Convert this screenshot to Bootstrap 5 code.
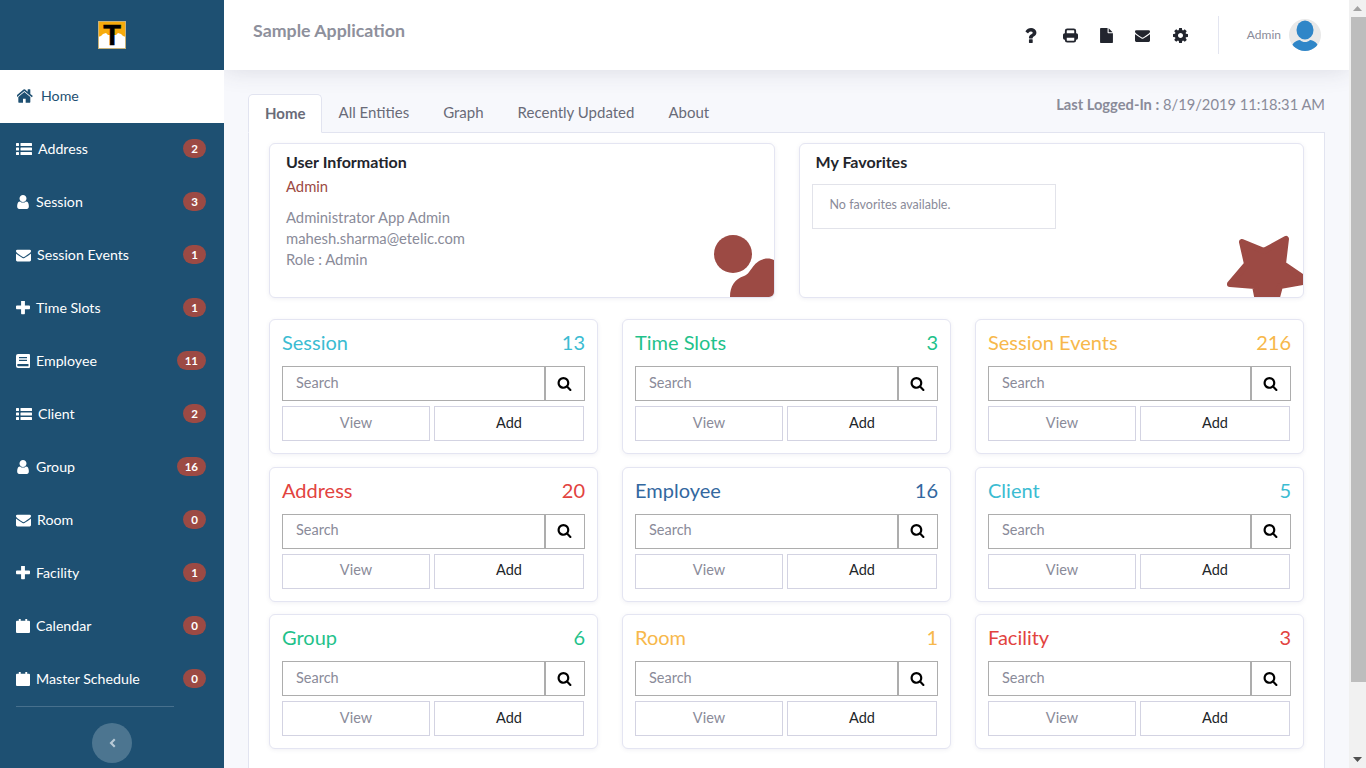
<!DOCTYPE html>
<html lang="en">
<head>
  <meta charset="UTF-8" />
  <title>Sample Application</title>
  <meta name="viewport" content="width=device-width, initial-scale=1" />
  <link href="https://cdn.jsdelivr.net/npm/bootstrap@5.3.0/dist/css/bootstrap.min.css" rel="stylesheet" />
  <style>
    html, body { height: 768px; overflow: hidden; }
    body { font-family: "Lato", "Open Sans", sans-serif; font-size: 14px; background: #f7f8fc; color: #8a8b99; }
    .app-shell { height: 768px; }

    /* sidebar */
    .side-bar { width: 224px; background: #1e5072; flex-shrink: 0; }
    .side-logo { height: 70px; }
    .logo-mark { width: 28px; height: 28px; position: relative; font: 700 29px/28px "Liberation Sans", sans-serif; color: #000; -webkit-text-stroke: .5px #000; }
    .logo-mark svg { position: absolute; left: 0; top: 0; }
    .logo-mark span { position: relative; }
    .side-link { height: 53px; padding: 0 18px 2px 16px; color: #fff; font-size: 14.2px; text-decoration: none; }
    .side-link.active { background: #fff; color: #1e5072; padding-left: 17px; }
    .side-ico { width: 14px; height: 14px; fill: currentColor; margin-right: 6px; flex-shrink: 0; }
    .side-ico.list-ico { width: 16px; margin-right: 6px; }
    .side-ico.mail-ico { width: 15px; margin-right: 6px; }
    .side-ico.home-ico { width: 16px; margin-right: 8px; }
    .side-count { background: #9c4a44; color: #fff; font-size: 11.5px; font-weight: 700; min-width: 21px; height: 19px; border-radius: 10px; padding: 0 8px; }
    .side-rule { height: 1px; background: #47708d; margin: 0 50px 0 16px; }
    .side-toggle { width: 40px; height: 40px; background: #4c7590; border: 0; color: #b9cad6; margin: 16px auto 0; padding: 0; }
    .side-toggle svg { width: 10px; height: 10px; fill: currentColor; }

    /* header */
    .top-bar { height: 70px; background: #fff; box-shadow: 0 0 24px rgba(60, 64, 90, .16); padding-left: 29px; padding-right: 28px; position: relative; z-index: 2; flex-shrink: 0; }
    .top-title { font-size: 17.8px; font-weight: 700; color: #8e909c; margin-top: -10px; }
    .top-ico { width: 15px; height: 15px; fill: #22252e; }
    .top-tools { gap: 21px; }
    .top-tools .help-ico { margin-right: 4px; }
    .top-tools .gear-ico { margin-left: 2px; }
    .top-divider { width: 1px; height: 38px; background: #e3e5f0; margin: 0 28px 0 30px; }
    .top-user { font-size: 12px; color: #8a8b99; }
    .top-avatar { width: 32px; height: 32px; margin-left: 8px; }

    /* tabs */
    .main-area { padding: 24px 24px 0; position: relative; }
    .last-login { position: absolute; right: 24px; top: 23px; font-size: 14.7px; }
    .last-login b { font-weight: 700; }
    .page-tabs { border-bottom-color: #e2e4f0; }
    .page-tabs .nav-link { color: #696b78; font-size: 15px; padding: 7px 17px; height: 39px; border-radius: 5px 5px 0 0; }
    .page-tabs .nav-link.active { background: #fff; border-color: #e2e4f0 #e2e4f0 #fff; color: #696b78; font-weight: 700; padding: 7px 15px 7px 16px; }
    .tab-body { background: #fff; border: 1px solid #e2e4f0; border-top: 0; padding: 10px 20px 40px; min-height: 660px; }

    /* info cards */
    .plain-card { border-color: #e4e5f2; border-radius: 6px; box-shadow: 0 1px 4px rgba(70, 70, 120, .08); }
    .info-card { height: 155px; overflow: hidden; padding: 8px 16px; }
    .info-title { font-size: 16px; font-weight: 700; color: #23252c; line-height: 20px; margin: 0 0 4px; }
    .info-role { color: #9c4a44; font-size: 14.8px; line-height: 21px; margin-bottom: 10px; }
    .info-line { font-size: 14.8px; line-height: 21px; }
    .info-art { position: absolute; right: 0; bottom: 0; fill: #9c4a44; }
    .fav-box { border: 1px solid #e2e3ea; width: 244px; height: 45px; margin: 8px 0 0 -4px; padding: 11px 17px; font-size: 12.5px; }
    .info-row { margin-bottom: 21px; }

    /* entity cards */
    .entity-row { --bs-gutter-y: 12.5px; }
    .entity-card { height: 135px; padding: 9px 12px; }
    .entity-head { font-size: 20px; line-height: 26px; margin-bottom: 11px; }
    .entity-search { height: 35px; }
    .entity-search .form-control { border: 1px solid #adadad; border-radius: 0; font-size: 14.5px; padding: 0 13px 2px; color: #8a8b99; box-shadow: none; }
    .entity-search .form-control::placeholder { color: #8a8b99; }
    .entity-search .btn { width: 40px; padding: 0 1px 1px 0; margin-left: 0 !important; border: 1px solid #adadad; border-radius: 0; background: #fff; }
    .entity-search .btn svg { width: 15px; height: 15px; fill: #000; }
    .entity-btns { gap: 4px; margin-top: 5px; padding-right: 1px; }
    .entity-btns .btn { height: 35px; padding: 0 0 2px; border: 1px solid #d3d3e2; border-radius: 0; font-size: 14.5px; background: #fff; }
    .view-btn { width: 148px; color: #8a8b99; }
    .add-btn { flex: 1; color: #212529; }
    .tone-teal { color: #3cbcd2; }
    .tone-green { color: #1fc28b; }
    .tone-amber { color: #f7b84b; }
    .tone-red { color: #e2433f; }
    .tone-blue { color: #33689f; }

    /* drawn scrollbar of the window */
    .win-scroll { width: 17px; background: #f1f1f1; flex-shrink: 0; position: relative; z-index: 3; }
    .scroll-up, .scroll-down { height: 17px; }
    .scroll-up svg, .scroll-down svg { width: 9px; height: 5px; }
    .scroll-up svg { fill: #a3a3a3; }
    .scroll-down svg { fill: #505050; }
    .scroll-thumb { height: 665px; background: #bdbdbd; margin-left: 2px; }
  </style>
</head>
<body>
  <svg class="d-none">
    <symbol id="i-home" viewBox="128 224 1536 1344"><path d="M1408 992v480q0 26-19 45t-45 19h-384v-384h-256v384h-384q-26 0-45-19t-19-45v-480q0-1 .5-3t.5-3l575-474 575 474q1 2 1 6zm223-69l-62 74q-8 9-21 11h-3q-13 0-21-7l-692-577-692 577q-12 8-24 7-13-2-21-11l-62-74q-8-10-7-23.5t11-21.5l719-599q32-26 76-26t76 26l244 204v-195q0-14 9-23t23-9h192q14 0 23 9t9 23v408l219 182q10 8 11 21.5t-7 23.5z"/></symbol>
    <symbol id="i-list" viewBox="0 0 16 14"><rect x="0" y="1" width="3" height="3" rx=".5"/><rect x="0" y="5.500" width="3" height="3" rx=".5"/><rect x="0" y="10" width="3" height="3" rx=".5"/><rect x="4.500" y="1" width="11.500" height="3" rx=".5"/><rect x="4.500" y="5.500" width="11.500" height="3" rx=".5"/><rect x="4.500" y="10" width="11.500" height="3" rx=".5"/></symbol>
    <symbol id="i-user" viewBox="128 128 1408 1536"><path d="M1536 1399q0 109-62.500 187t-150.500 78h-854q-88 0-150.500-78t-62.500-187q0-85 8.500-160.500t31.500-152 58.500-131 94-89 134.500-34.500q131 128 313 128t313-128q76 0 134.500 34.500t94 89 58.500 131 31.500 152 8.500 160.500zm-256-887q0 159-112.500 271.500t-271.500 112.500-271.500-112.500-112.500-271.500 112.500-271.500 271.500-112.500 271.500 112.500 112.500 271.500z" transform="translate(-64 0)"/></symbol>
    <symbol id="i-mail" viewBox="0 128 1792 1536"><path d="M1792 710v794q0 66-47 113t-113 47h-1472q-66 0-113-47t-47-113v-794q44 49 101 87 362 246 497 345 57 42 92.500 65.500t94.500 48 110 24.500h2q51 0 110-24.500t94.500-48 92.500-65.500q170-123 498-345 57-39 100-87zm0-294q0 79-49 151t-122 123q-376 261-468 325-10 7-42.500 30.500t-54 38-52 32.500-57.500 27-50 9h-2q-23 0-50-9t-57.500-27-52-32.500-54-38-42.500-30.500q-91-64-262-182.500t-205-142.500q-62-42-117-115.500t-55-136.500q0-78 41.500-130t118.500-52h1472q65 0 112.500 47t47.500 113z"/></symbol>
    <symbol id="i-plus" viewBox="192 192 1408 1408"><path d="M1600 736v192q0 40-28 68t-68 28h-416v416q0 40-28 68t-68 28h-192q-40 0-68-28t-28-68v-416h-416q-40 0-68-28t-28-68v-192q0-40 28-68t68-28h416v-416q0-40 28-68t68-28h192q40 0 68 28t28 68v416h416q40 0 68 28t28 68z"/></symbol>
    <symbol id="i-book" viewBox="0 0 14 14"><path fill-rule="evenodd" d="M2 0h11a1 1 0 0 1 1 1v12a1 1 0 0 1-1 1H2a2 2 0 0 1-2-2V2a2 2 0 0 1 2-2zm1 3v1.200h8V3zm0 2.800V7h8V5.800zM2.200 10a1.100 1.100 0 0 0 0 2.200H12.500V10z"/></symbol>
    <symbol id="i-cal" viewBox="0 0 14 14"><path d="M2.800 0h1.900v1.800H9.300V0h1.900v1.800H13a1 1 0 0 1 1 1V13a1 1 0 0 1-1 1H1a1 1 0 0 1-1-1V2.800a1 1 0 0 1 1-1h1.800z"/></symbol>
    <symbol id="i-search" viewBox="0 0 1792 1792"><path d="M1216 832q0-185-131.500-316.500t-316.500-131.500-316.500 131.500-131.500 316.500 131.500 316.500 316.500 131.500 316.500-131.500 131.500-316.500zm512 832q0 52-38 90t-90 38q-54 0-90-38l-343-342q-179 124-399 124-143 0-273.500-55.500t-225-150-150-225-55.500-273.500 55.500-273.500 150-225 225-150 273.500-55.500 273.500 55.500 225 150 150 225 55.500 273.500q0 220-124 399l343 343q37 37 37 90z"/></symbol>
    <symbol id="i-help" viewBox="260 256 1280 1280"><path d="M1088 1256v240q0 16-12 28t-28 12h-240q-16 0-28-12t-12-28v-240q0-16 12-28t28-12h240q16 0 28 12t12 28zm316-600q0 54-15.500 101t-35 76.500-55 59.500-57.500 43.500-61 35.500q-41 23-68.500 65t-27.500 67q0 17-12 32.500t-28 15.500h-240q-15 0-25.500-18.500t-10.500-37.500v-45q0-83 65-156.500t143-108.500q59-27 84-56t25-76q0-42-46.500-74t-107.500-32q-65 0-108 29-35 25-107 115-13 16-31 16-12 0-25-8l-164-125q-13-10-15.500-25t5.500-28q160-266 464-266 80 0 161 31t146 83 106 127.500 41 158.500z"/></symbol>
    <symbol id="i-print" viewBox="0 0 16 15"><path fill-rule="evenodd" d="M4.500 0h7A2.500 2.500 0 0 1 14 2.500V5h.2A1.800 1.800 0 0 1 16 6.800v3.400a1.800 1.800 0 0 1-1.800 1.800H14v.5a2.500 2.500 0 0 1-2.500 2.500h-7A2.500 2.500 0 0 1 2 12.500V12h-.2A1.800 1.800 0 0 1 0 10.200V6.800A1.800 1.800 0 0 1 1.800 5H2V2.500A2.500 2.500 0 0 1 4.500 0zm0 2a.5.5 0 0 0-.5.5V5h8V2.500a.5.5 0 0 0-.5-.5zM4 10v2.500a.5.5 0 0 0 .5.500h7a.5.500 0 0 0 .5-.500V10z"/></symbol>
    <symbol id="i-file" viewBox="128 0 1536 1792"><path d="M1152 512v-472q22 14 36 28l408 408q14 14 28 36h-472zm-128 32q0 40 28 68t68 28h544v1056q0 40-28 68t-68 28h-1344q-40 0-68-28t-28-68v-1600q0-40 28-68t68-28h800v544z"/></symbol>
    <symbol id="i-gear" viewBox="128 128 1536 1536"><path d="M1152 896q0-106-75-181t-181-75-181 75-75 181 75 181 181 75 181-75 75-181zm512-109v222q0 12-8 23t-20 13l-185 28q-19 54-39 91 35 50 107 138 10 12 10 25t-9 23q-27 37-99 108t-94 71q-12 0-26-9l-138-108q-44 23-91 38-16 136-29 186-7 28-36 28h-222q-14 0-24.500-8.500t-11.500-21.500l-28-184q-49-16-90-37l-141 107q-10 9-25 9-14 0-25-11-126-114-165-168-7-10-7-23 0-12 8-23 15-21 51-66.500t54-70.500q-27-50-41-99l-183-27q-13-2-21-12.500t-8-23.500v-222q0-12 8-23t19-13l186-28q14-46 39-92-40-57-107-138-10-12-10-24 0-10 9-23 26-36 98.500-107.500t94.500-71.500q13 0 26 10l138 107q44-23 91-38 16-136 29-186 7-28 36-28h222q14 0 24.500 8.500t11.500 21.500l28 184q49 16 90 37l142-107q9-9 24-9 13 0 25 10 129 119 165 170 7 8 7 22 0 12-8 23-15 21-51 66.500t-54 70.500q26 50 41 98l183 28q13 2 21 12.500t8 23.500z"/></symbol>
  </svg>

  <div class="app-shell d-flex">
    <!-- Sidebar -->
    <aside class="side-bar d-flex flex-column">
      <div class="side-logo d-flex align-items-center justify-content-center">
        <div class="logo-mark d-flex justify-content-center">
          <svg width="28" height="28" viewBox="0 0 28 28">
            <rect width="28" height="28" fill="#f7ab0c"/>
            <path d="M0 28V16l3-1 2-2 3-1 2 2h8l2-2 3 1 2 2 3 1v12z" fill="#fff"/>
            <rect x=".5" y=".5" width="27" height="27" fill="none" stroke="#c8b27a"/>
          </svg>
          <span>T</span>
        </div>
      </div>
      <nav class="nav flex-column">
        <a class="side-link active d-flex align-items-center" href="#"><svg class="side-ico home-ico"><use href="#i-home"/></svg><span>Home</span></a>
        <a class="side-link d-flex align-items-center" href="#"><svg class="side-ico list-ico"><use href="#i-list"/></svg><span>Address</span><span class="side-count ms-auto d-flex align-items-center justify-content-center">2</span></a>
        <a class="side-link d-flex align-items-center" href="#"><svg class="side-ico"><use href="#i-user"/></svg><span>Session</span><span class="side-count ms-auto d-flex align-items-center justify-content-center">3</span></a>
        <a class="side-link d-flex align-items-center" href="#"><svg class="side-ico mail-ico"><use href="#i-mail"/></svg><span>Session Events</span><span class="side-count ms-auto d-flex align-items-center justify-content-center">1</span></a>
        <a class="side-link d-flex align-items-center" href="#"><svg class="side-ico"><use href="#i-plus"/></svg><span>Time Slots</span><span class="side-count ms-auto d-flex align-items-center justify-content-center">1</span></a>
        <a class="side-link d-flex align-items-center" href="#"><svg class="side-ico"><use href="#i-book"/></svg><span>Employee</span><span class="side-count ms-auto d-flex align-items-center justify-content-center">11</span></a>
        <a class="side-link d-flex align-items-center" href="#"><svg class="side-ico list-ico"><use href="#i-list"/></svg><span>Client</span><span class="side-count ms-auto d-flex align-items-center justify-content-center">2</span></a>
        <a class="side-link d-flex align-items-center" href="#"><svg class="side-ico"><use href="#i-user"/></svg><span>Group</span><span class="side-count ms-auto d-flex align-items-center justify-content-center">16</span></a>
        <a class="side-link d-flex align-items-center" href="#"><svg class="side-ico mail-ico"><use href="#i-mail"/></svg><span>Room</span><span class="side-count ms-auto d-flex align-items-center justify-content-center">0</span></a>
        <a class="side-link d-flex align-items-center" href="#"><svg class="side-ico"><use href="#i-plus"/></svg><span>Facility</span><span class="side-count ms-auto d-flex align-items-center justify-content-center">1</span></a>
        <a class="side-link d-flex align-items-center" href="#"><svg class="side-ico"><use href="#i-cal"/></svg><span>Calendar</span><span class="side-count ms-auto d-flex align-items-center justify-content-center">0</span></a>
        <a class="side-link d-flex align-items-center" href="#"><svg class="side-ico"><use href="#i-cal"/></svg><span>Master Schedule</span><span class="side-count ms-auto d-flex align-items-center justify-content-center">0</span></a>
      </nav>
      <div class="side-rule"></div>
      <button class="side-toggle rounded-circle d-flex align-items-center justify-content-center" type="button">
        <svg viewBox="0 0 10 10"><path d="M7 0.500 8.500 2 5.500 5l3 3L7 9.500 2.500 5z"/></svg>
      </button>
    </aside>

    <!-- Main column -->
    <div class="flex-grow-1 d-flex flex-column overflow-hidden">
      <header class="top-bar d-flex align-items-center">
        <div class="top-title">Sample Application</div>
        <div class="top-tools d-flex align-items-center ms-auto">
          <svg class="top-ico help-ico"><use href="#i-help"/></svg>
          <svg class="top-ico"><use href="#i-print"/></svg>
          <svg class="top-ico"><use href="#i-file"/></svg>
          <svg class="top-ico"><use href="#i-mail"/></svg>
          <svg class="top-ico gear-ico"><use href="#i-gear"/></svg>
        </div>
        <div class="top-divider"></div>
        <span class="top-user">Admin</span>
        <svg class="top-avatar" viewBox="0 0 32 32">
          <defs><clipPath id="avatarClip"><circle cx="16" cy="16" r="16"/></clipPath></defs>
          <circle cx="16" cy="16" r="16" fill="#e9e9e9"/>
          <g clip-path="url(#avatarClip)" fill="#2f86c8">
            <ellipse cx="16" cy="11" rx="8.500" ry="9.500"/>
            <path d="M3 32v-4c0-4 4-6.500 8-7 1.500 1.500 3 2 5 2s3.500-.5 5-2c4 .5 8 3 8 7v4z"/>
          </g>
        </svg>
      </header>

      <main class="main-area flex-grow-1">
        <div class="last-login"><b>Last Logged-In :</b> 8/19/2019 11:18:31 AM</div>
        <ul class="nav nav-tabs page-tabs">
          <li class="nav-item"><a class="nav-link active" href="#">Home</a></li>
          <li class="nav-item"><a class="nav-link border-0" href="#">All Entities</a></li>
          <li class="nav-item"><a class="nav-link border-0" href="#">Graph</a></li>
          <li class="nav-item"><a class="nav-link border-0" href="#">Recently Updated</a></li>
          <li class="nav-item"><a class="nav-link border-0" href="#">About</a></li>
        </ul>
        <div class="tab-body">
          <div class="row gx-4 info-row">
            <div class="col-6">
              <div class="card plain-card info-card">
                <h6 class="info-title">User Information</h6>
                <div class="info-role">Admin</div>
                <div class="info-line">Administrator App Admin</div>
                <div class="info-line">mahesh.sharma@etelic.com</div>
                <div class="info-line">Role : Admin</div>
                <svg class="info-art" width="62" height="64" viewBox="0 0 62 64">
                  <circle cx="21" cy="21" r="19"/>
                  <path d="M18 64c0-11 5-18 14-21 7-2 8-14 20-17 4-1 8 0 10 1v37z"/>
                </svg>
              </div>
            </div>
            <div class="col-6">
              <div class="card plain-card info-card">
                <h6 class="info-title">My Favorites</h6>
                <div class="fav-box">No favorites available.</div>
                <svg class="info-art" width="80" height="66" viewBox="1224 232 80 66">
                  <path stroke="#9c4a44" stroke-width="6" stroke-linejoin="round" d="M1243 243 1265 252 1287 240 1284 265 1309 282 1281 287 1277 302 1259 302 1256 287 1231 285 1248 265z"/>
                </svg>
              </div>
            </div>
          </div>

          <div class="row gx-4 entity-row">
            <div class="col-4">
              <div class="card plain-card entity-card">
                <div class="entity-head tone-teal d-flex justify-content-between"><span>Session</span><span>13</span></div>
                <div class="input-group entity-search"><input class="form-control" type="text" placeholder="Search" /><button class="btn d-flex align-items-center justify-content-center" type="button"><svg><use href="#i-search"/></svg></button></div>
                <div class="entity-btns d-flex"><button class="btn view-btn" type="button">View</button><button class="btn add-btn" type="button">Add</button></div>
              </div>
            </div>
            <div class="col-4">
              <div class="card plain-card entity-card">
                <div class="entity-head tone-green d-flex justify-content-between"><span>Time Slots</span><span>3</span></div>
                <div class="input-group entity-search"><input class="form-control" type="text" placeholder="Search" /><button class="btn d-flex align-items-center justify-content-center" type="button"><svg><use href="#i-search"/></svg></button></div>
                <div class="entity-btns d-flex"><button class="btn view-btn" type="button">View</button><button class="btn add-btn" type="button">Add</button></div>
              </div>
            </div>
            <div class="col-4">
              <div class="card plain-card entity-card">
                <div class="entity-head tone-amber d-flex justify-content-between"><span>Session Events</span><span>216</span></div>
                <div class="input-group entity-search"><input class="form-control" type="text" placeholder="Search" /><button class="btn d-flex align-items-center justify-content-center" type="button"><svg><use href="#i-search"/></svg></button></div>
                <div class="entity-btns d-flex"><button class="btn view-btn" type="button">View</button><button class="btn add-btn" type="button">Add</button></div>
              </div>
            </div>
            <div class="col-4">
              <div class="card plain-card entity-card">
                <div class="entity-head tone-red d-flex justify-content-between"><span>Address</span><span>20</span></div>
                <div class="input-group entity-search"><input class="form-control" type="text" placeholder="Search" /><button class="btn d-flex align-items-center justify-content-center" type="button"><svg><use href="#i-search"/></svg></button></div>
                <div class="entity-btns d-flex"><button class="btn view-btn" type="button">View</button><button class="btn add-btn" type="button">Add</button></div>
              </div>
            </div>
            <div class="col-4">
              <div class="card plain-card entity-card">
                <div class="entity-head tone-blue d-flex justify-content-between"><span>Employee</span><span>16</span></div>
                <div class="input-group entity-search"><input class="form-control" type="text" placeholder="Search" /><button class="btn d-flex align-items-center justify-content-center" type="button"><svg><use href="#i-search"/></svg></button></div>
                <div class="entity-btns d-flex"><button class="btn view-btn" type="button">View</button><button class="btn add-btn" type="button">Add</button></div>
              </div>
            </div>
            <div class="col-4">
              <div class="card plain-card entity-card">
                <div class="entity-head tone-teal d-flex justify-content-between"><span>Client</span><span>5</span></div>
                <div class="input-group entity-search"><input class="form-control" type="text" placeholder="Search" /><button class="btn d-flex align-items-center justify-content-center" type="button"><svg><use href="#i-search"/></svg></button></div>
                <div class="entity-btns d-flex"><button class="btn view-btn" type="button">View</button><button class="btn add-btn" type="button">Add</button></div>
              </div>
            </div>
            <div class="col-4">
              <div class="card plain-card entity-card">
                <div class="entity-head tone-green d-flex justify-content-between"><span>Group</span><span>6</span></div>
                <div class="input-group entity-search"><input class="form-control" type="text" placeholder="Search" /><button class="btn d-flex align-items-center justify-content-center" type="button"><svg><use href="#i-search"/></svg></button></div>
                <div class="entity-btns d-flex"><button class="btn view-btn" type="button">View</button><button class="btn add-btn" type="button">Add</button></div>
              </div>
            </div>
            <div class="col-4">
              <div class="card plain-card entity-card">
                <div class="entity-head tone-amber d-flex justify-content-between"><span>Room</span><span>1</span></div>
                <div class="input-group entity-search"><input class="form-control" type="text" placeholder="Search" /><button class="btn d-flex align-items-center justify-content-center" type="button"><svg><use href="#i-search"/></svg></button></div>
                <div class="entity-btns d-flex"><button class="btn view-btn" type="button">View</button><button class="btn add-btn" type="button">Add</button></div>
              </div>
            </div>
            <div class="col-4">
              <div class="card plain-card entity-card">
                <div class="entity-head tone-red d-flex justify-content-between"><span>Facility</span><span>3</span></div>
                <div class="input-group entity-search"><input class="form-control" type="text" placeholder="Search" /><button class="btn d-flex align-items-center justify-content-center" type="button"><svg><use href="#i-search"/></svg></button></div>
                <div class="entity-btns d-flex"><button class="btn view-btn" type="button">View</button><button class="btn add-btn" type="button">Add</button></div>
              </div>
            </div>
          </div>
        </div>
      </main>
    </div>

    <!-- Window scrollbar as it appears in the picture -->
    <div class="win-scroll d-flex flex-column">
      <div class="scroll-up d-flex align-items-center justify-content-center"><svg viewBox="0 0 9 5"><path d="M4.500 0 9 5H0z"/></svg></div>
      <div class="scroll-thumb"></div>
      <div class="scroll-down d-flex align-items-center justify-content-center mt-auto"><svg viewBox="0 0 9 5"><path d="M0 0h9L4.500 5z"/></svg></div>
    </div>
  </div>
</body>
</html>
